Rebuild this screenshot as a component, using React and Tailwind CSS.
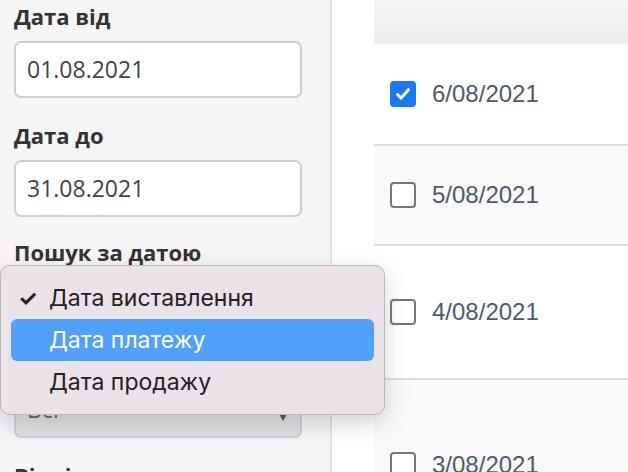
import React from 'react'

const rows = [
  { date: '6/08/2021', checked: true, h: 'h-[100px]', bg: 'bg-white' },
  { date: '5/08/2021', checked: false, h: 'h-[100px]', bg: 'bg-[#f9f9f9]' },
  { date: '4/08/2021', checked: false, h: 'h-[134px]', bg: 'bg-white' },
  { date: '3/08/2021', checked: false, h: 'h-[172px]', bg: 'bg-[#f9f9f9]' },
]

function Checkbox({ checked }) {
  if (checked) {
    return (
      <span className="flex h-[26px] w-[26px] shrink-0 items-center justify-center rounded-[4px] bg-[#1b78f4]">
        <svg width="18" height="18" viewBox="0 0 18 18">
          <path d="M3.5 9.5l3.6 3.6 7.4-8.4" fill="none" stroke="white" strokeWidth="3" strokeLinecap="round" strokeLinejoin="round" />
        </svg>
      </span>
    )
  }
  return <span className="h-[26px] w-[26px] shrink-0 rounded-[4px] border-2 border-[#767676] bg-white" />
}

function Label({ children }) {
  return <div className="text-[22px] font-bold leading-[30px] text-[#333]">{children}</div>
}

function DateInput({ value }) {
  return (
    <div className="mt-[10px] flex h-[57px] w-[288px] items-center rounded-[7px] border-2 border-[#cfcfcf] bg-white px-[11px] text-[23px] text-[#444]">
      {value}
    </div>
  )
}

export default function App() {
  return (
    <div className="relative flex h-[472px] w-[628px] overflow-hidden bg-white" style={{ fontFamily: '"Open Sans", sans-serif' }}>
      <aside className="w-[332px] shrink-0 border-r-2 border-[#dce5ee] bg-[#f5f5f5] pl-[14px] pt-[1px]">
        <Label>Дата від</Label>
        <DateInput value="01.08.2021" />
        <div className="mt-[22px]">
          <Label>Дата до</Label>
        </div>
        <DateInput value="31.08.2021" />
        <div className="mt-[20px]">
          <Label>Пошук за датою</Label>
        </div>
        <div className="mt-[10px] h-[45px] w-[288px] rounded-[7px] border-2 border-[#cfcfcf] bg-white" />
        <div className="mt-[26px]">
          <Label>Тип</Label>
        </div>
        <div className="mt-[3px] flex h-[57px] w-[288px] items-center justify-between rounded-[7px] border-2 border-[#c3d3e3] bg-gradient-to-b from-[#eeeeee] to-[#e0e0e0] px-[11px] text-[23px] text-[#666]">
          <span>Всі</span>
          <svg width="12" height="14" viewBox="0 0 12 14" className="mt-[10px]">
            <path d="M0 2h12L6 13z" fill="#555" />
          </svg>
        </div>
        <div className="mt-[22px]">
          <Label>Відділ</Label>
        </div>
      </aside>

      <main className="flex-1 pl-[42px]" style={{ fontFamily: '"Liberation Sans", Arial, sans-serif' }}>
        <div className="h-[44px] bg-gradient-to-b from-[#f4f4f4] to-[#ececec]" />
        {rows.map((r, i) => (
          <div
            key={r.date}
            className={`flex items-center gap-[16px] pl-[16px] ${r.h} ${r.bg} ${i > 0 ? 'border-t-2 border-[#dddddd]' : ''}`}
          >
            <Checkbox checked={r.checked} />
            <span className="text-[24px] text-[#4d5b6b]">{r.date}</span>
          </div>
        ))}
      </main>

      <div
        className="absolute left-0 top-[265px] w-[385px] rounded-[10px] border border-[#bdb8bc] bg-[#e9e3e7] px-[10px] py-[11px] shadow-[0_8px_24px_rgba(0,0,0,0.18)]"
        style={{ fontFamily: 'Inter, "Liberation Sans", sans-serif' }}
      >
        <div className="relative flex h-[42px] items-center pl-[38px] text-[23px] text-[#222]">
          <span className="absolute left-[7px] text-[22px] font-bold">✓</span>
          Дата виставлення
        </div>
        <div className="flex h-[42px] items-center rounded-[6px] bg-[#51a0fc] pl-[38px] text-[23px] text-white">
          Дата платежу
        </div>
        <div className="flex h-[42px] items-center pl-[38px] text-[23px] text-[#222]">Дата продажу</div>
      </div>
    </div>
  )
}
